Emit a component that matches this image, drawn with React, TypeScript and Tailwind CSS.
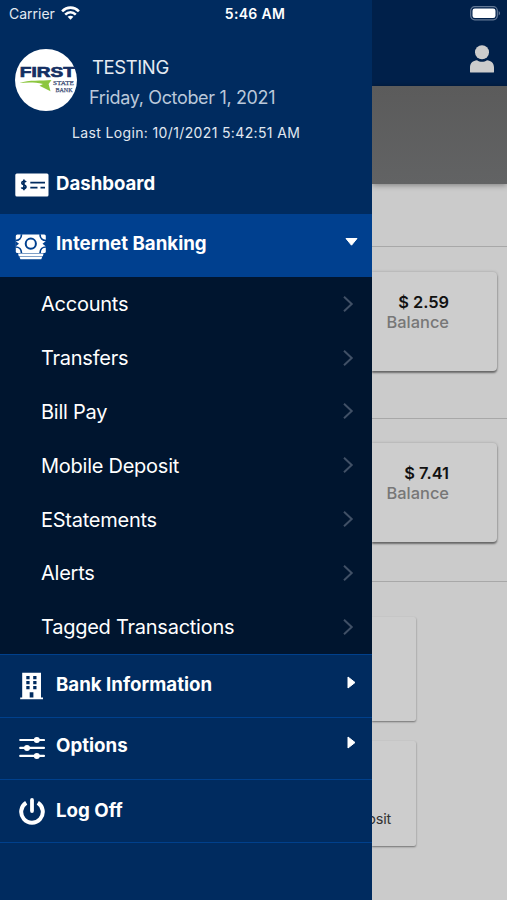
import { ReactNode } from "react";

type SubLink = { name: string };
type MenuItem = { name: string; icon: ReactNode; rowClass: string; arrowClass?: string };

const subLinks: SubLink[] = [
  { name: "Accounts" },
  { name: "Transfers" },
  { name: "Bill Pay" },
  { name: "Mobile Deposit" },
  { name: "EStatements" },
  { name: "Alerts" },
  { name: "Tagged Transactions" },
];

function BankLogo() {
  return (
    <svg width="62" height="62" viewBox="0 0 62 62" className="shrink-0">
      <circle cx="31" cy="31" r="31" fill="#fff" />
      <text
        x="4.8"
        y="28.4"
        fontFamily="Liberation Sans, sans-serif"
        fontWeight="700"
        fontSize="14.5"
        fill="#142f63"
        stroke="#142f63"
        strokeWidth="0.7"
        textLength="55"
        lengthAdjust="spacingAndGlyphs"
      >
        FIRST
      </text>
      <path d="M4.5 34C14 30.6 26 32.2 36.5 31L33.6 35 35.5 42.2 24.5 36.8 28 35C20 33 12 33.2 4.5 34Z" fill="#8cc63f" />
      <g fontFamily="Liberation Serif, serif" fontSize="7" fill="#3b4c74" stroke="#3b4c74" strokeWidth="0.25">
        <text x="38" y="36.4" textLength="21" lengthAdjust="spacingAndGlyphs">
          STATE
        </text>
        <text x="40.5" y="42.9" textLength="17" lengthAdjust="spacingAndGlyphs">
          BANK
        </text>
      </g>
    </svg>
  );
}

function CheckIcon() {
  return (
    <svg width="34" height="24" viewBox="0 0 34 24">
      <rect x="0.3" y="0.5" width="33.2" height="23" rx="1.5" fill="#fff" />
      <path
        d="M11 9.2C10.4 7.8 6.8 7.8 6.8 9.9S11 11.4 11 13.7 7.1 15.9 6.5 14.4M8.9 6.5V17.3"
        fill="none"
        stroke="#002b5f"
        strokeWidth="1.7"
      />
      <path d="M15.3 9.7H30M15.3 14.6H22.5M25.5 14.6H30" stroke="#002b5f" strokeWidth="1.7" />
    </svg>
  );
}

function CashIcon() {
  return (
    <svg width="32" height="26" viewBox="0 0 32 26">
      <rect x="0.8" y="0.5" width="30" height="18.5" rx="1.5" fill="#fff" />
      <g fill="none" stroke="#00408f" strokeWidth="1.7">
        <path d="M.5 6.5C4 6.5 6.5 4 6.5.3M31 6.5C27.5 6.5 25 4 25 .3M.5 13C4 13 6.5 15.5 6.5 19.2M31 13C27.5 13 25 15.5 25 19.2" />
        <circle cx="15.8" cy="9.7" r="5.1" strokeWidth="2" />
      </g>
      <path d="M.5 7L4 9.75.5 12.5ZM31 7L27.5 9.75 31 12.5Z" fill="#00408f" />
      <path d="M3 19.6H28.6L27.8 22.2H3.8ZM4.5 22.8H27.2L26.3 25.2H5.4Z" fill="#fff" />
    </svg>
  );
}

function BuildingIcon() {
  return (
    <svg width="24" height="28" viewBox="0 0 24 28">
      <path
        d="M2.2.7H21V25.5H23V27.2H.2V25.5H2.2ZM6.3 4V7.3H9.6V4ZM13.2 4V7.3H16.5V4ZM6.3 9V12.3H9.6V9ZM13.2 9V12.3H16.5V9ZM6.3 14V17.3H9.6V14ZM13.2 14V17.3H16.5V14ZM9.7 20.2V25.5H13.4V20.2Z"
        fill="#fff"
        fillRule="evenodd"
      />
    </svg>
  );
}

function SlidersIcon() {
  return (
    <svg width="26" height="24" viewBox="0 0 26 24" fill="#fff" className="mb-[2px]">
      <path d="M1.2 4H25M1.2 11.9H25M1.2 19.9H25" stroke="#fff" strokeWidth="2.1" strokeLinecap="round" />
      <circle cx="17.8" cy="4" r="3" />
      <circle cx="8" cy="11.9" r="3" />
      <circle cx="17.8" cy="19.9" r="3" />
    </svg>
  );
}

function PowerIcon() {
  return (
    <svg width="26" height="28" viewBox="0 0 26 28" fill="none" stroke="#fff" strokeWidth="4">
      <path d="M7.2 5.8A10.8 10.8 0 1 0 18.8 5.8" />
      <path d="M13 3V14" strokeLinecap="round" strokeWidth="3.8" />
    </svg>
  );
}

const menuItems: MenuItem[] = [
  { name: "Bank Information", icon: <BuildingIcon />, rowClass: "pb-[1px]", arrowClass: "mb-[7px]" },
  { name: "Options", icon: <SlidersIcon />, rowClass: "pb-[6px]", arrowClass: "mb-[13px]" },
  { name: "Log Off", icon: <PowerIcon />, rowClass: "pb-0" },
];

function StatusBar() {
  return (
    <div className="absolute inset-x-0 top-0 z-10 flex h-[27px] items-center justify-between pl-[9px] pr-[6px] text-white">
      <div className="flex w-40 items-center gap-[6px]">
        <span className="text-[14px] text-[#e3e9f1]">Carrier</span>
        <svg width="19" height="15" viewBox="0 0 19 15" fill="none" stroke="#fff" strokeWidth="2.6">
          <path d="M1.1 5.3C6 .4 13 .4 17.9 5.3M4.2 8.6C7.3 5.6 11.7 5.6 14.8 8.6" />
          <path d="M6.6 10.8C8.3 9.4 10.7 9.4 12.4 10.8L9.5 13.8Z" fill="#fff" stroke="none" />
        </svg>
      </div>
      <span className="text-[14px] font-semibold tracking-[0.3px]">5:46 AM</span>
      <div className="flex w-40 justify-end">
        <svg width="31" height="15" viewBox="0 0 31 15">
          <rect x="0.7" y="0.7" width="26.6" height="13.1" rx="4" fill="none" stroke="#637895" strokeWidth="1.2" />
          <rect x="2.5" y="2.5" width="23" height="9.5" rx="2.3" fill="#fff" />
          <path d="M28.7 5C30.5 5.7 30.5 8.8 28.7 9.5Z" fill="#637895" />
        </svg>
      </div>
    </div>
  );
}

function Sidebar() {
  return (
    <aside className="flex w-[372px] shrink-0 flex-col bg-[#002b5f] text-white">
      <div className="h-[154px] pt-[49px]">
        <div className="flex pl-[15px]">
          <BankLogo />
          <div className="flex flex-col pl-3 pt-[3px]">
            <span className="pl-[3px] text-[18.5px] leading-[30px] tracking-[-0.4px] text-[#e6ebf2]">TESTING</span>
            <span className="text-[18px] leading-[31px] tracking-[-0.34px] text-[#bac8da]">
              Friday, October 1, 2021
            </span>
          </div>
        </div>
        <p className="pl-[72px] pt-[9px] text-[14px] leading-[22px] tracking-[0.36px] text-[#e1e8f0]">
          Last Login: 10/1/2021 5:42:51 AM
        </p>
      </div>

      <div className="flex h-[60px] items-center pl-[15px]">
        <div className="flex w-[41px] pt-[2px]">
          <CheckIcon />
        </div>
        <span className="text-[18.6px] font-bold">Dashboard</span>
      </div>

      <div className="flex h-[63px] items-center bg-[#00408f] pl-[15px] pr-[14px]">
        <div className="flex w-[41px] pt-[2px]">
          <CashIcon />
        </div>
        <span className="flex-1 pb-[2px] text-[18.7px] font-bold">Internet Banking</span>
        <svg width="13" height="8" viewBox="0 0 13 8" className="mb-[8px]">
          <path d="M1 .5H12L6.5 7.2Z" fill="#fff" stroke="#fff" strokeLinejoin="round" />
        </svg>
      </div>

      {/* Internet Banking links */}
      <ul className="h-[377px] bg-[#00152f]">
        {subLinks.map(link => (
          <li key={link.name} className="flex h-[53.8px] items-center justify-between pl-[41px] pr-[18px]">
            <span className="pt-px text-[20px] tracking-[-0.25px]">{link.name}</span>
            <svg width="12" height="18" viewBox="0 0 12 18" fill="none" stroke="#405066" strokeWidth="2">
              <path d="M2 1.8L9.7 9 2 16.2" />
            </svg>
          </li>
        ))}
      </ul>

      <div className="border-b border-[#00408c]">
        {menuItems.map(item => (
          <div key={item.name} className="flex h-[62.7px] items-center border-t border-[#00408c] pl-[15px] pr-[16px]">
            <div className="flex w-[41px] justify-center pr-[8px]">{item.icon}</div>
            <span className={`flex-1 text-[18.7px] font-bold ${item.rowClass}`}>{item.name}</span>
            {item.arrowClass && (
              <svg width="9" height="13" viewBox="0 0 9 13" className={item.arrowClass}>
                <path d="M1 1V12L8 6.5Z" fill="#fff" stroke="#fff" strokeLinejoin="round" />
              </svg>
            )}
          </div>
        ))}
      </div>
    </aside>
  );
}

function BalanceCard({ amount }: { amount: string }) {
  return (
    <div className="mr-[10px] flex h-[99px] flex-col items-end rounded-r-[4px] bg-[#cdcdcd] pr-[48px] pt-[20px] shadow-[0_2px_2px_rgba(0,0,0,0.45),0_0_3px_rgba(0,0,0,0.22)]">
      <span className="text-[16.4px] leading-5 font-semibold text-[#111]">{amount}</span>
      <span className="text-[16.4px] leading-5 font-medium text-[#777]">Balance</span>
    </div>
  );
}

function Accounts() {
  return (
    <main className="flex min-w-0 flex-1 flex-col overflow-hidden bg-[#cbcbcb]">
      <header className="flex h-[86px] shrink-0 items-end justify-end bg-[#00204a] pr-[13px] pb-[13px]">
        <svg width="24" height="28" viewBox="0 0 24 28" fill="#ccc">
          <circle cx="12" cy="7.2" r="7" />
          <path d="M0 27V22.5C0 18 3 15.6 7 15.2 10 17.2 14 17.2 17 15.2 21 15.6 24 18 24 22.5V27Q24 27.6 23 27.6H1Q0 27.6 0 27Z" />
        </svg>
      </header>
      <div className="h-[98px] shrink-0 bg-gradient-to-b from-[#5b5b5b] to-[#626364] shadow-[0_1px_6px_rgba(0,0,0,0.4)]" />
      <div className="h-[63px] shrink-0 border-b border-[#a8a8a8]" />
      <div className="h-[172px] shrink-0 border-b border-[#a8a8a8] pt-[25px]">
        <BalanceCard amount="$ 2.59" />
      </div>
      <div className="h-[163px] shrink-0 border-b border-[#a8a8a8] pt-[24px]">
        <BalanceCard amount="$ 7.41" />
      </div>
      <div className="flex flex-col gap-[20px] pr-[91px] pt-[35px]">
        <div className="h-[104px] rounded-r-[2px] bg-[#cdcdcd] shadow-[0_1px_2px_rgba(0,0,0,0.45)]" />
        <div className="flex h-[105px] items-end justify-end rounded-r-[2px] bg-[#cdcdcd] pr-[25px] pb-[16px] shadow-[0_1px_2px_rgba(0,0,0,0.45)]">
          <span className="text-[14.5px] tracking-[-0.2px] whitespace-nowrap text-[#333]">Mobile Deposit</span>
        </div>
      </div>
    </main>
  );
}

export default function App() {
  return (
    <div className="relative flex h-[900px] w-[507px] overflow-hidden font-['Inter','Liberation_Sans',sans-serif]">
      <StatusBar />
      <div className="z-[1] flex">
        <Sidebar />
      </div>
      <Accounts />
    </div>
  );
}
